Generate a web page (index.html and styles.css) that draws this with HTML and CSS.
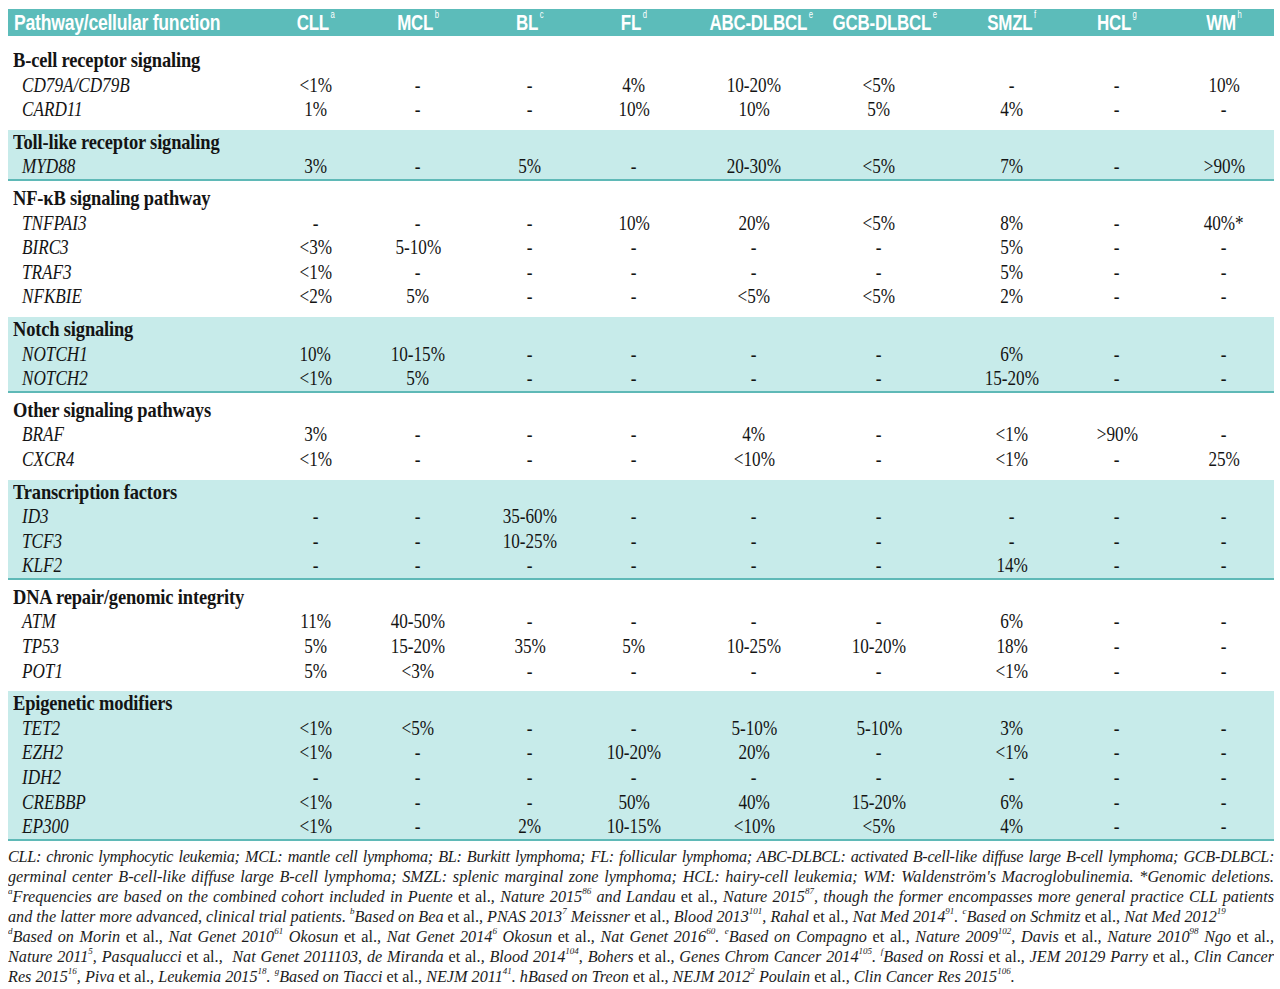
FILE: index.html
```html
<!DOCTYPE html>
<html lang="en">
<head>
<meta charset="utf-8">
<title>Mutation frequencies by pathway</title>
<link rel="stylesheet" href="styles.css">
</head>
<body>
<div class="page">
  <div class="thead grid">
    <div class="hc first"><span class="ht">Pathway/cellular function</span></div>
    <div class="hc"><span class="ht">CLL<sup>a</sup></span></div>
    <div class="hc"><span class="ht">MCL<sup>b</sup></span></div>
    <div class="hc"><span class="ht">BL<sup>c</sup></span></div>
    <div class="hc"><span class="ht">FL<sup>d</sup></span></div>
    <div class="hc"><span class="ht">ABC-DLBCL<sup>e</sup></span></div>
    <div class="hc"><span class="ht">GCB-DLBCL<sup>e</sup></span></div>
    <div class="hc"><span class="ht">SMZL<sup>f</sup></span></div>
    <div class="hc"><span class="ht">HCL<sup>g</sup></span></div>
    <div class="hc"><span class="ht">WM<sup>h</sup></span></div>
  </div>

  <section class="sec white first-sec">
    <div class="row"><span class="head">B-cell receptor signaling</span></div>
    <div class="row grid"><div class="gc"><span class="g">CD79A/CD79B</span></div><div><span class="v">&lt;1%</span></div><div><span class="v">-</span></div><div><span class="v">-</span></div><div><span class="v">4%</span></div><div><span class="v">10-20%</span></div><div><span class="v">&lt;5%</span></div><div><span class="v">-</span></div><div><span class="v">-</span></div><div><span class="v">10%</span></div></div>
    <div class="row grid"><div class="gc"><span class="g">CARD11</span></div><div><span class="v">1%</span></div><div><span class="v">-</span></div><div><span class="v">-</span></div><div><span class="v">10%</span></div><div><span class="v">10%</span></div><div><span class="v">5%</span></div><div><span class="v">4%</span></div><div><span class="v">-</span></div><div><span class="v">-</span></div></div>
  </section>

  <section class="sec teal">
    <div class="row"><span class="head">Toll-like receptor signaling</span></div>
    <div class="row grid"><div class="gc"><span class="g">MYD88</span></div><div><span class="v">3%</span></div><div><span class="v">-</span></div><div><span class="v">5%</span></div><div><span class="v">-</span></div><div><span class="v">20-30%</span></div><div><span class="v">&lt;5%</span></div><div><span class="v">7%</span></div><div><span class="v">-</span></div><div><span class="v">&gt;90%</span></div></div>
  </section>

  <section class="sec white">
    <div class="row"><span class="head">NF-&kappa;B signaling pathway</span></div>
    <div class="row grid"><div class="gc"><span class="g">TNFPAI3</span></div><div><span class="v">-</span></div><div><span class="v">-</span></div><div><span class="v">-</span></div><div><span class="v">10%</span></div><div><span class="v">20%</span></div><div><span class="v">&lt;5%</span></div><div><span class="v">8%</span></div><div><span class="v">-</span></div><div><span class="v">40%*</span></div></div>
    <div class="row grid"><div class="gc"><span class="g">BIRC3</span></div><div><span class="v">&lt;3%</span></div><div><span class="v">5-10%</span></div><div><span class="v">-</span></div><div><span class="v">-</span></div><div><span class="v">-</span></div><div><span class="v">-</span></div><div><span class="v">5%</span></div><div><span class="v">-</span></div><div><span class="v">-</span></div></div>
    <div class="row grid"><div class="gc"><span class="g">TRAF3</span></div><div><span class="v">&lt;1%</span></div><div><span class="v">-</span></div><div><span class="v">-</span></div><div><span class="v">-</span></div><div><span class="v">-</span></div><div><span class="v">-</span></div><div><span class="v">5%</span></div><div><span class="v">-</span></div><div><span class="v">-</span></div></div>
    <div class="row grid"><div class="gc"><span class="g">NFKBIE</span></div><div><span class="v">&lt;2%</span></div><div><span class="v">5%</span></div><div><span class="v">-</span></div><div><span class="v">-</span></div><div><span class="v">&lt;5%</span></div><div><span class="v">&lt;5%</span></div><div><span class="v">2%</span></div><div><span class="v">-</span></div><div><span class="v">-</span></div></div>
  </section>

  <section class="sec teal">
    <div class="row"><span class="head">Notch signaling</span></div>
    <div class="row grid"><div class="gc"><span class="g">NOTCH1</span></div><div><span class="v">10%</span></div><div><span class="v">10-15%</span></div><div><span class="v">-</span></div><div><span class="v">-</span></div><div><span class="v">-</span></div><div><span class="v">-</span></div><div><span class="v">6%</span></div><div><span class="v">-</span></div><div><span class="v">-</span></div></div>
    <div class="row grid"><div class="gc"><span class="g">NOTCH2</span></div><div><span class="v">&lt;1%</span></div><div><span class="v">5%</span></div><div><span class="v">-</span></div><div><span class="v">-</span></div><div><span class="v">-</span></div><div><span class="v">-</span></div><div><span class="v">15-20%</span></div><div><span class="v">-</span></div><div><span class="v">-</span></div></div>
  </section>

  <section class="sec white">
    <div class="row"><span class="head">Other signaling pathways</span></div>
    <div class="row grid"><div class="gc"><span class="g">BRAF</span></div><div><span class="v">3%</span></div><div><span class="v">-</span></div><div><span class="v">-</span></div><div><span class="v">-</span></div><div><span class="v">4%</span></div><div><span class="v">-</span></div><div><span class="v">&lt;1%</span></div><div><span class="v">&gt;90%</span></div><div><span class="v">-</span></div></div>
    <div class="row grid"><div class="gc"><span class="g">CXCR4</span></div><div><span class="v">&lt;1%</span></div><div><span class="v">-</span></div><div><span class="v">-</span></div><div><span class="v">-</span></div><div><span class="v">&lt;10%</span></div><div><span class="v">-</span></div><div><span class="v">&lt;1%</span></div><div><span class="v">-</span></div><div><span class="v">25%</span></div></div>
  </section>

  <section class="sec teal">
    <div class="row"><span class="head">Transcription factors</span></div>
    <div class="row grid"><div class="gc"><span class="g">ID3</span></div><div><span class="v">-</span></div><div><span class="v">-</span></div><div><span class="v">35-60%</span></div><div><span class="v">-</span></div><div><span class="v">-</span></div><div><span class="v">-</span></div><div><span class="v">-</span></div><div><span class="v">-</span></div><div><span class="v">-</span></div></div>
    <div class="row grid"><div class="gc"><span class="g">TCF3</span></div><div><span class="v">-</span></div><div><span class="v">-</span></div><div><span class="v">10-25%</span></div><div><span class="v">-</span></div><div><span class="v">-</span></div><div><span class="v">-</span></div><div><span class="v">-</span></div><div><span class="v">-</span></div><div><span class="v">-</span></div></div>
    <div class="row grid"><div class="gc"><span class="g">KLF2</span></div><div><span class="v">-</span></div><div><span class="v">-</span></div><div><span class="v">-</span></div><div><span class="v">-</span></div><div><span class="v">-</span></div><div><span class="v">-</span></div><div><span class="v">14%</span></div><div><span class="v">-</span></div><div><span class="v">-</span></div></div>
  </section>

  <section class="sec white">
    <div class="row"><span class="head">DNA repair/genomic integrity</span></div>
    <div class="row grid"><div class="gc"><span class="g">ATM</span></div><div><span class="v">11%</span></div><div><span class="v">40-50%</span></div><div><span class="v">-</span></div><div><span class="v">-</span></div><div><span class="v">-</span></div><div><span class="v">-</span></div><div><span class="v">6%</span></div><div><span class="v">-</span></div><div><span class="v">-</span></div></div>
    <div class="row grid"><div class="gc"><span class="g">TP53</span></div><div><span class="v">5%</span></div><div><span class="v">15-20%</span></div><div><span class="v">35%</span></div><div><span class="v">5%</span></div><div><span class="v">10-25%</span></div><div><span class="v">10-20%</span></div><div><span class="v">18%</span></div><div><span class="v">-</span></div><div><span class="v">-</span></div></div>
    <div class="row grid"><div class="gc"><span class="g">POT1</span></div><div><span class="v">5%</span></div><div><span class="v">&lt;3%</span></div><div><span class="v">-</span></div><div><span class="v">-</span></div><div><span class="v">-</span></div><div><span class="v">-</span></div><div><span class="v">&lt;1%</span></div><div><span class="v">-</span></div><div><span class="v">-</span></div></div>
  </section>

  <section class="sec teal">
    <div class="row"><span class="head">Epigenetic modifiers</span></div>
    <div class="row grid"><div class="gc"><span class="g">TET2</span></div><div><span class="v">&lt;1%</span></div><div><span class="v">&lt;5%</span></div><div><span class="v">-</span></div><div><span class="v">-</span></div><div><span class="v">5-10%</span></div><div><span class="v">5-10%</span></div><div><span class="v">3%</span></div><div><span class="v">-</span></div><div><span class="v">-</span></div></div>
    <div class="row grid"><div class="gc"><span class="g">EZH2</span></div><div><span class="v">&lt;1%</span></div><div><span class="v">-</span></div><div><span class="v">-</span></div><div><span class="v">10-20%</span></div><div><span class="v">20%</span></div><div><span class="v">-</span></div><div><span class="v">&lt;1%</span></div><div><span class="v">-</span></div><div><span class="v">-</span></div></div>
    <div class="row grid"><div class="gc"><span class="g">IDH2</span></div><div><span class="v">-</span></div><div><span class="v">-</span></div><div><span class="v">-</span></div><div><span class="v">-</span></div><div><span class="v">-</span></div><div><span class="v">-</span></div><div><span class="v">-</span></div><div><span class="v">-</span></div><div><span class="v">-</span></div></div>
    <div class="row grid"><div class="gc"><span class="g">CREBBP</span></div><div><span class="v">&lt;1%</span></div><div><span class="v">-</span></div><div><span class="v">-</span></div><div><span class="v">50%</span></div><div><span class="v">40%</span></div><div><span class="v">15-20%</span></div><div><span class="v">6%</span></div><div><span class="v">-</span></div><div><span class="v">-</span></div></div>
    <div class="row grid"><div class="gc"><span class="g">EP300</span></div><div><span class="v">&lt;1%</span></div><div><span class="v">-</span></div><div><span class="v">2%</span></div><div><span class="v">10-15%</span></div><div><span class="v">&lt;10%</span></div><div><span class="v">&lt;5%</span></div><div><span class="v">4%</span></div><div><span class="v">-</span></div><div><span class="v">-</span></div></div>
  </section>

  <div class="notes">
    <div class="ln j tight">CLL: chronic lymphocytic leukemia; MCL: mantle cell lymphoma; BL: Burkitt lymphoma; FL: follicular lymphoma; ABC-DLBCL: activated B-cell-like diffuse large B-cell lymphoma; GCB&#8209;DLBCL:</div>
    <div class="ln j">germinal center B-cell-like diffuse large B-cell lymphoma; SMZL: splenic marginal zone lymphoma; HCL: hairy-cell leukemia; WM: Waldenstr&ouml;m's Macroglobulinemia. *Genomic deletions.</div>
    <div class="ln j"><sup>a</sup>Frequencies are based on the combined cohort included in Puente <span class="ro">et al.</span>, Nature 2015<sup>86</sup> and Landau <span class="ro">et al.</span>, Nature 2015<sup>87</sup>, though the former encompasses more general practice CLL patients</div>
    <div class="ln">and the latter more advanced, clinical trial patients. <sup>b</sup>Based on Bea <span class="ro">et al.</span>, PNAS 2013<sup>7</sup> Meissner <span class="ro">et al.</span>, Blood 2013<sup>101</sup>, Rahal <span class="ro">et al.</span>, Nat Med 2014<sup>91</sup>. <sup>c</sup>Based on Schmitz <span class="ro">et al.</span>, Nat Med 2012<sup>19</sup></div>
    <div class="ln j"><sup>d</sup>Based on Morin <span class="ro">et al.</span>, Nat Genet 2010<sup>61</sup> Okosun <span class="ro">et al.</span>, Nat Genet 2014<sup>6</sup> Okosun <span class="ro">et al.</span>, Nat Genet 2016<sup>60</sup>. <sup>e</sup>Based on Compagno <span class="ro">et al.</span>, Nature 2009<sup>102</sup>, Davis <span class="ro">et al.</span>, Nature 2010<sup>98</sup> Ngo <span class="ro">et al.</span>,</div>
    <div class="ln j">Nature 2011<sup>5</sup>, Pasqualucci <span class="ro">et al.</span>, &nbsp;Nat Genet 2011103, de Miranda <span class="ro">et al.</span>, Blood 2014<sup>104</sup>, Bohers <span class="ro">et al.</span>, Genes Chrom Cancer 2014<sup>105</sup>. <sup>f</sup>Based on Rossi <span class="ro">et al.</span>, JEM 20129 Parry <span class="ro">et al.</span>, Clin Cancer</div>
    <div class="ln">Res 2015<sup>16</sup>, Piva <span class="ro">et al.</span>, Leukemia 2015<sup>18</sup>. <sup>g</sup>Based on Tiacci <span class="ro">et al.</span>, NEJM 2011<sup>41</sup>. hBased on Treon <span class="ro">et al.</span>, NEJM 2012<sup>2</sup> Poulain <span class="ro">et al.</span>, Clin Cancer Res 2015<sup>106</sup>.</div>
  </div>
</div>
</body>
</html>
```

FILE: styles.css
```css
* { box-sizing: border-box; }

html, body {
  margin: 0;
  padding: 0;
  background: #ffffff;
}

body {
  font-family: "Liberation Serif", "Times New Roman", serif;
  color: #141414;
}

.page {
  width: 1280px;
  padding: 9px 6px 0 8px;
}

.grid {
  display: grid;
  grid-template-columns: 256px 103px 107px 108px 112px 123px 129px 119px 107px 102px;
}

.grid > :nth-child(3) { padding-right: 5px; }
.grid > :nth-child(4) { padding-left: 4px; }
.grid > :nth-child(5) { padding-right: 8px; }
.grid > :nth-child(6) { padding-right: 3px; }
.grid > :nth-child(7) { padding-right: 5px; }
.grid > :nth-child(8) { padding-left: 13px; }
.grid > :nth-child(9) { padding-right: 3px; }
.grid > :nth-child(10) { padding-left: 2px; }

/* header bar */
.thead {
  height: 27px;
  background: #5cbcba;
  color: #ffffff;
  align-items: center;
  margin-bottom: 7px;
  font-family: "Liberation Sans", "Arial", sans-serif;
  font-weight: bold;
  font-size: 22px;
  line-height: 27px;
}

.hc {
  text-align: center;
  white-space: nowrap;
}

.ht {
  display: inline-block;
  transform: scaleX(0.77);
  transform-origin: center center;
  letter-spacing: -0.3px;
}

.hc.first {
  text-align: left;
  padding-left: 6px;
}

.hc.first .ht {
  transform: scaleX(0.8);
  transform-origin: left center;
}

.hc sup {
  font-size: 10px;
  font-weight: normal;
  line-height: 0;
  vertical-align: top;
  position: relative;
  top: 6px;
  margin-left: 2px;
}

/* sections */
.sec.white {
  padding: 5px 0 8px;
}

.sec.teal {
  background: #c7ebea;
  border-bottom: 2px solid #5fb9b7;
}

.row {
  height: 24.6px;
  line-height: 24.6px;
  font-size: 22px;
  white-space: nowrap;
}

.row.grid > div {
  text-align: center;
}

.row.grid > .gc {
  text-align: left;
  padding-left: 14px;
}

.head {
  display: inline-block;
  font-weight: bold;
  margin-left: 5px;
  transform: scaleX(0.84);
  transform-origin: left center;
  letter-spacing: -0.2px;
}

.g {
  display: inline-block;
  font-style: italic;
  transform: scaleX(0.78);
  transform-origin: left center;
}

.v {
  display: inline-block;
  transform: scaleX(0.78);
  transform-origin: center center;
}

/* footnotes */
.notes {
  padding-top: 6px;
  font-style: italic;
  font-size: 16.2px;
  color: #1c1c1c;
}

.ln {
  height: 20px;
  line-height: 20px;
  white-space: nowrap;
  overflow: hidden;
}

.ln.j {
  text-align: justify;
  text-align-last: justify;
  white-space: normal;
}

.ln.tight {
  letter-spacing: -0.3px;
}

.ro {
  font-style: normal;
}

.notes sup {
  font-size: 9px;
  line-height: 0;
  vertical-align: top;
  position: relative;
  top: 4px;
}
```
